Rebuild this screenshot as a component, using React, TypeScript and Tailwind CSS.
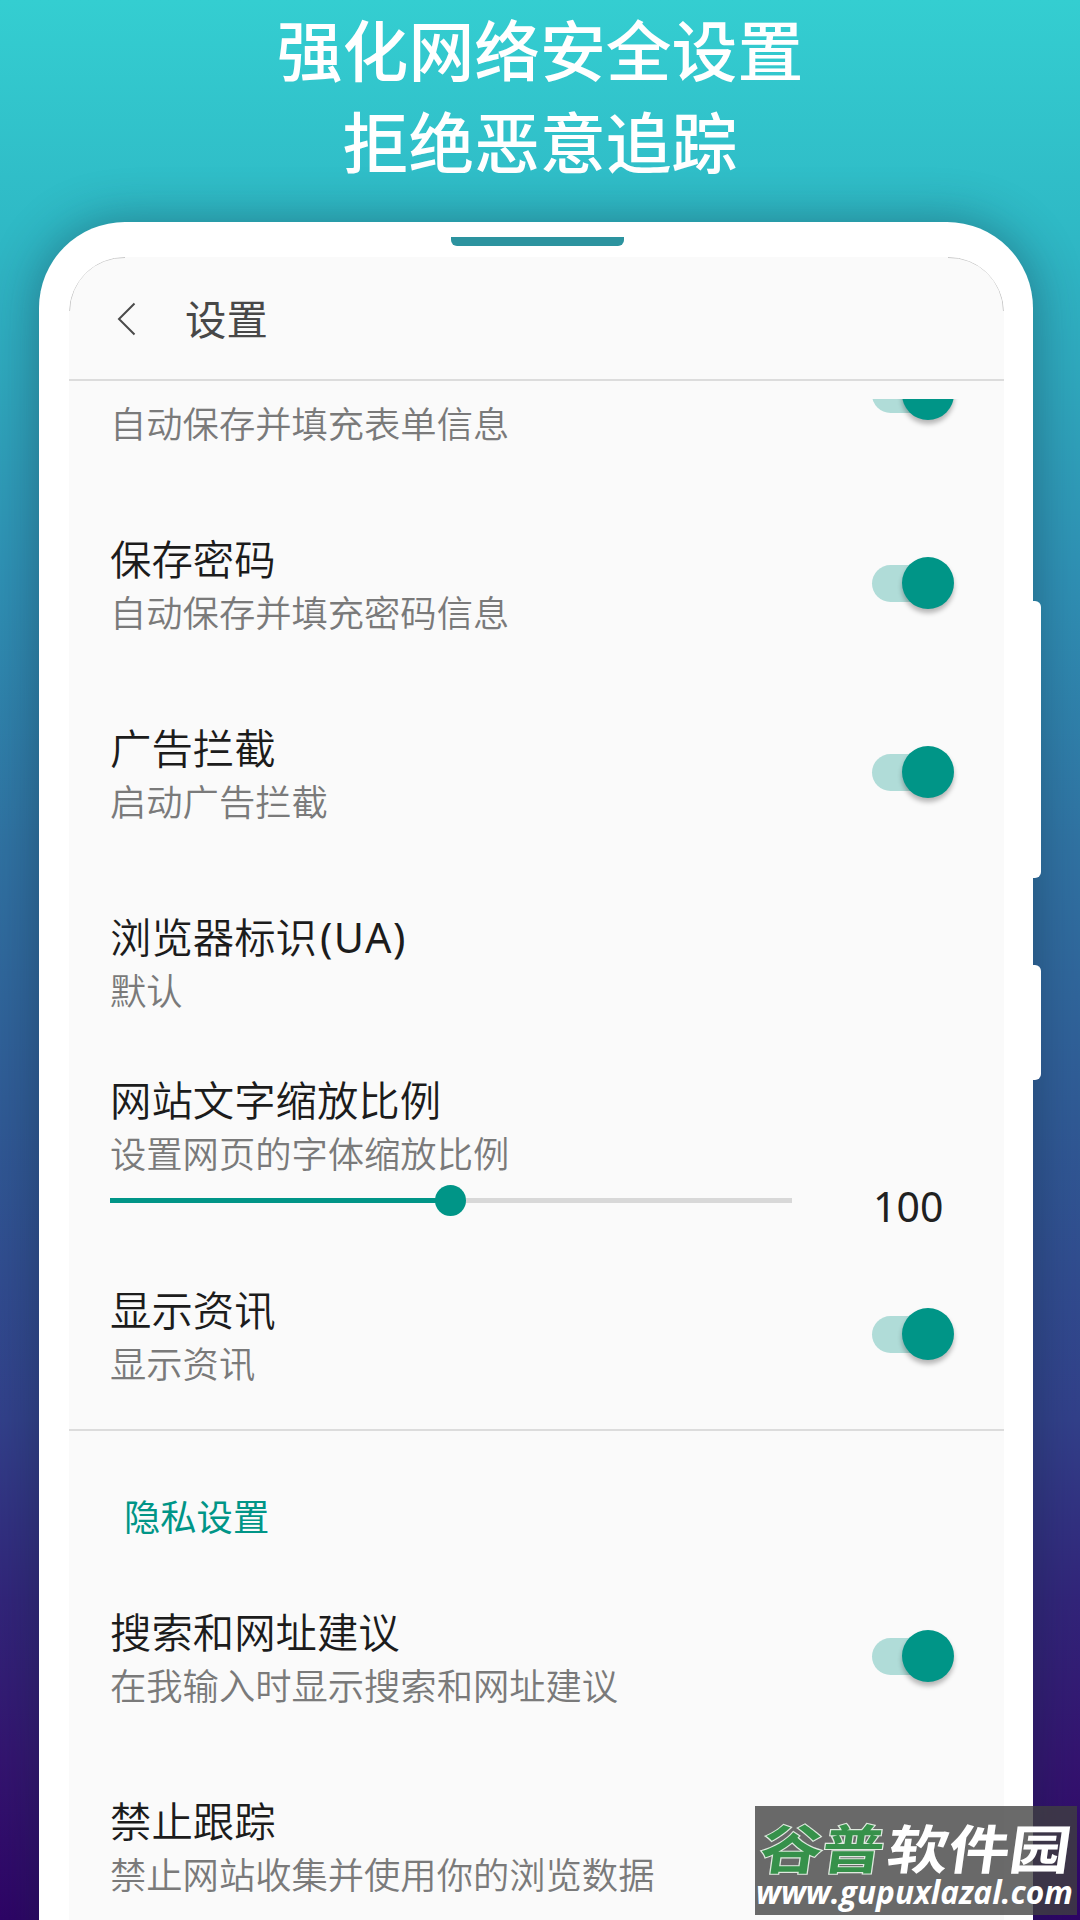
import { ReactNode } from "react";

function Toggle() {
  return (
    <div className="relative -left-px -top-[3px] flex h-[52px] w-[83px] items-center pl-px">
      <div className="h-[37px] w-[70px] rounded-full bg-[#b0dcd8]" />
      <div className="absolute right-0 top-0 size-[52px] rounded-full bg-[#009587] shadow-[0_4px_5px_rgba(0,0,0,0.28)]" />
    </div>
  );
}

type RowProps = {
  title?: ReactNode;
  summary: string;
  className?: string;
  children?: ReactNode;
};

function Row({ title, summary, className = "", children }: RowProps) {
  return (
    <div className={`flex shrink-0 items-center justify-between pl-[41px] pr-[49px] ${className}`}>
      <div>
        <div className="h-14 whitespace-nowrap text-[41.4px] font-[350] leading-[53px] text-[#1c1c1c]">{title}</div>
        <div className="h-[50px] whitespace-nowrap text-[36.3px] font-[350] leading-[48px] text-[#7a7a7a]">{summary}</div>
      </div>
      {children}
    </div>
  );
}

function Slider() {
  return (
    <div className="flex h-[42px] shrink-0 items-center pl-[41px]">
      <div className="relative -top-px flex h-[31px] w-[682px] items-center">
        <div className="h-[5px] w-[341px] bg-[#009587]" />
        <div className="h-[5px] flex-1 bg-[#d8d8d8]" />
        <div className="absolute left-[325px] top-0 size-[31px] rounded-full bg-[#009587]" />
      </div>
      <span className="relative top-[5px] ml-[81px] text-[41px] leading-none text-[#212121]">100</span>
    </div>
  );
}

function Header() {
  return (
    <header className="flex h-[122px] shrink-0 items-center pl-[48px]">
      <svg className="mt-px h-[34px] w-[20px]" viewBox="0 0 20 34" fill="none" stroke="#4a4a4a" strokeWidth="2">
        <path d="M17.5 1.5 2 17l15.500 15.500" />
      </svg>
      <h1 className="ml-[48px] mt-[2px] text-[41.4px] leading-[56px] text-[#484848]">设置</h1>
    </header>
  );
}

function Watermark() {
  return (
    <div className="absolute left-[755px] top-[1806px] h-[109px] w-[322px] overflow-hidden bg-[#404040]/78">
      <svg className="block h-full w-full" viewBox="0 0 322 109">
        <g fontFamily="'Noto Sans CJK SC', sans-serif" fontWeight="700" fontSize="60">
          <text
            transform="translate(3 63) skewX(-8) scale(1.03 0.88)"
            fill="#36914a"
            stroke="#dfe9df"
            strokeWidth="2.500"
            paintOrder="stroke"
          >
            谷普
          </text>
          <text transform="translate(130 63) skewX(-8) scale(1.02 0.88)" fill="#ffffff">
            软件园
          </text>
        </g>
        <text
          x="1"
          y="98"
          textLength="317"
          lengthAdjust="spacingAndGlyphs"
          fontFamily="'Open Sans', 'Noto Sans', sans-serif"
          fontWeight="700"
          fontStyle="italic"
          fontSize="32"
          fill="#ffffff"
        >
          www.gupuxlazal.com
        </text>
      </svg>
    </div>
  );
}

export default function App() {
  return (
    <main className="relative flex h-[1920px] w-[1080px] flex-col overflow-hidden bg-[linear-gradient(180deg,#34ced1_0px,#2fbac6_220px,#2fa3bb_420px,#2f90b4_580px,#3072a2_850px,#305a95_1120px,#32408a_1420px,#32257a_1600px,#341470_1760px,#2e0466_1920px)] font-['Noto_Sans','Noto_Sans_CJK_SC',sans-serif]">
      <div className="h-[222px] shrink-0 pt-[5px] text-center text-[65.800px] font-medium leading-[92px] text-white">
        <p>强化网络安全设置</p>
        <p>拒绝恶意追踪</p>
      </div>

      {/* Phone frame */}
      <div className="relative ml-[39px] flex h-[1800px] w-[994px] shrink-0 flex-col rounded-t-[86px] bg-white pl-[30px] pr-[29px] shadow-[0_0_50px_rgba(20,40,60,0.42)]">
        <div className="ml-[382px] mt-[15px] h-[9px] w-[173px] rounded-b-[6px] bg-[#2c939f]" />
        <div className="absolute -right-[8px] top-[379px] h-[277px] w-[9px] rounded-r-[6px] bg-white" />
        <div className="absolute -right-[8px] top-[743px] h-[115px] w-[9px] rounded-r-[6px] bg-white" />

        {/* Screen */}
        <div className="relative mt-[11px] flex flex-1 flex-col overflow-hidden rounded-t-[56px] bg-[#fafafa]">
          <svg className="absolute left-0 top-0 h-[56px] w-full" viewBox="0 0 935 56" fill="none" stroke="#c8c8c8">
            <path d="M.5 54A54 54 0 0 1 56 .5M879 .5A54 54 0 0 1 934.500 54" />
          </svg>
          <Header />
          <div className="h-[2px] shrink-0 bg-[#dcdcdc]" />

          <div className="mt-[18px] flex flex-1 flex-col overflow-hidden">
            <Row summary="自动保存并填充表单信息" className="-mt-[55px]">
              <Toggle />
            </Row>
            <Row title="保存密码" summary="自动保存并填充密码信息" className="mt-[83px]">
              <Toggle />
            </Row>
            <Row title="广告拦截" summary="启动广告拦截" className="mt-[83px]">
              <Toggle />
            </Row>
            <Row
              title={
                <>
                  浏览器标识<span className="ml-[3px] font-normal tracking-[1.4px]">(UA)</span>
                </>
              }
              summary="默认"
              className="mt-[83px]"
            />
            <Row title="网站文字缩放比例" summary="设置网页的字体缩放比例" className="mt-[57px]" />
            <Slider />
            <Row title="显示资讯" summary="显示资讯" className="mt-[62px]">
              <Toggle />
            </Row>

            <div className="mt-[39px] h-[2px] shrink-0 bg-[#dcdcdc]" />
            <h2 className="mt-[61px] shrink-0 pl-[55px] text-[36.3px] leading-[50px] text-[#009587]">隐私设置</h2>
            <Row title="搜索和网址建议" summary="在我输入时显示搜索和网址建议" className="mt-[64px]">
              <Toggle />
            </Row>
            <Row title="禁止跟踪" summary="禁止网站收集并使用你的浏览数据" className="mt-[83px]" />
          </div>
        </div>
      </div>

      <Watermark />
    </main>
  );
}
